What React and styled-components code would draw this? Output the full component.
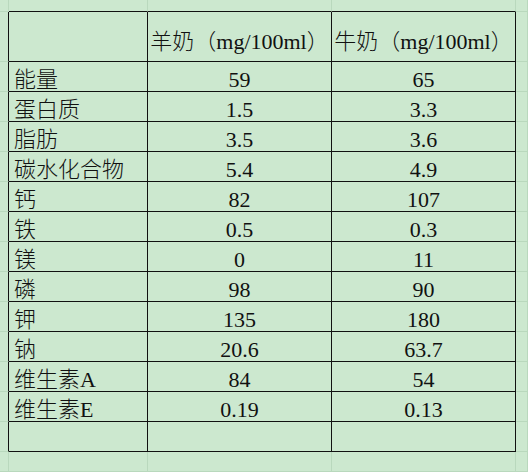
import styled, { createGlobalStyle } from "styled-components";

const GlobalStyle = createGlobalStyle`
  html, body {
    margin: 0;
    padding: 0;
    background: #cce8cf;
  }
`;

const GRID = "#b9d8bd";
const INK = "#111";

const Sheet = styled.div`
  display: grid;
  grid-template-columns: 9px 139px 184px 184px 12px;
  grid-template-rows: 12px 50px repeat(13, 30px) 20px;
  width: 528px;
  height: 472px;
  overflow: hidden;
  background: #cce8cf;
  color: ${INK};
  font-family: "Liberation Serif", "Noto Sans CJK SC", serif;
  font-size: 22px;
  font-weight: 300;
  line-height: 22px;
`;

const Cell = styled.div`
  box-sizing: border-box;
  display: flex;
  align-items: flex-end;
  justify-content: ${(p) => (p.$label ? "flex-start" : "center")};
  padding: 0 0 ${(p) => (p.$header ? "8px" : "0")} ${(p) => (p.$label ? "5px" : "0")};
  border-right: 1px solid ${(p) => (p.$darkRight ? INK : GRID)};
  border-bottom: 1px solid ${(p) => (p.$darkBottom ? INK : GRID)};
  white-space: nowrap;
  overflow: hidden;
`;

const nutrients = [
  ["能量", "59", "65"],
  ["蛋白质", "1.5", "3.3"],
  ["脂肪", "3.5", "3.6"],
  ["碳水化合物", "5.4", "4.9"],
  ["钙", "82", "107"],
  ["铁", "0.5", "0.3"],
  ["镁", "0", "11"],
  ["磷", "98", "90"],
  ["钾", "135", "180"],
  ["钠", "20.6", "63.7"],
  ["维生素A", "84", "54"],
  ["维生素E", "0.19", "0.13"],
  ["", "", ""],
];

export default function App() {
  // row 0 is the blank strip above, rows 1..14 are the bordered table, 15 is below
  const rows = [
    ["", "", ""],
    ["", "羊奶（mg/100ml）", "牛奶（mg/100ml）"],
    ...nutrients,
    ["", "", ""],
  ];

  return (
    <>
      <GlobalStyle />
      <Sheet>
        {rows.map((row, r) => {
          const inTable = r >= 1 && r <= 14;
          const cells = ["", ...row, ""];
          return cells.map((text, c) => (
            <Cell
              key={`${r}-${c}`}
              $label={c === 1}
              $header={r === 1}
              $darkRight={inTable && c <= 3}
              $darkBottom={r <= 14 && c >= 1 && c <= 3}
            >
              {text}
            </Cell>
          ));
        })}
      </Sheet>
    </>
  );
}
